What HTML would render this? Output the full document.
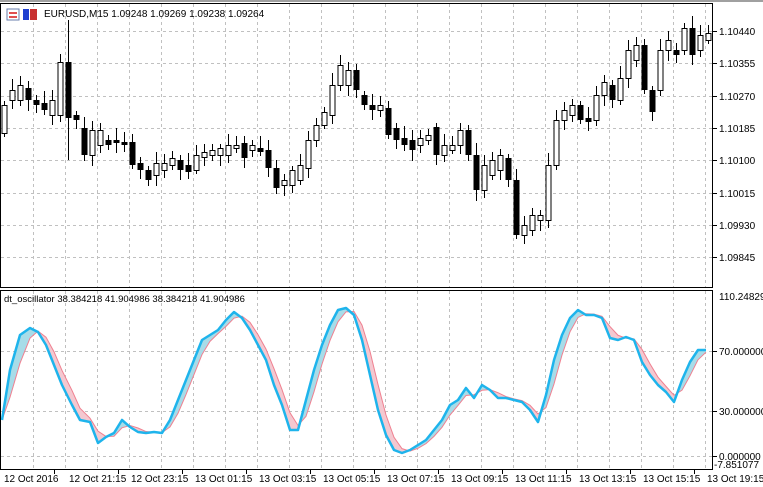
<!DOCTYPE html>
<html><head><meta charset="utf-8"><style>
html,body{margin:0;padding:0;background:#fff;width:763px;height:487px;overflow:hidden;font-family:"Liberation Sans","DejaVu Sans",sans-serif;}
svg{display:block}
</style></head><body>
<svg id="s" width="763" height="487" xmlns="http://www.w3.org/2000/svg" font-family="Liberation Sans, DejaVu Sans, sans-serif" font-size="10">
<rect x="0" y="0" width="763" height="2" fill="#a0a0a0"/>
<g id="grid" stroke="#c0c0c0" stroke-dasharray="3,3" stroke-width="1"></g>
<g id="candles"></g>
<g id="osc"></g>
<rect x="0.5" y="3.5" width="712" height="284" fill="none" stroke="#000"/>
<rect x="0.5" y="290.5" width="712" height="179" fill="none" stroke="#000"/>
<g fill="#000">
<text x="719" y="35">1.10440</text>
<text x="719" y="67">1.10355</text>
<text x="719" y="100">1.10270</text>
<text x="719" y="132">1.10185</text>
<text x="719" y="164">1.10100</text>
<text x="719" y="197">1.10015</text>
<text x="719" y="229">1.09930</text>
<text x="719" y="261">1.09845</text>
<text x="719" y="300">110.248292</text>
<text x="719" y="355">70.000000</text>
<text x="719" y="415">30.000000</text>
<text x="719" y="460">0.000000</text>
<text x="714" y="468">-7.851077</text>
<text x="4" y="482">12 Oct 2016</text>
<text x="69" y="482">12 Oct 21:15</text>
<text x="131" y="482">12 Oct 23:15</text>
<text x="195" y="482">13 Oct 01:15</text>
<text x="259" y="482">13 Oct 03:15</text>
<text x="323" y="482">13 Oct 05:15</text>
<text x="387" y="482">13 Oct 07:15</text>
<text x="451" y="482">13 Oct 09:15</text>
<text x="515" y="482">13 Oct 11:15</text>
<text x="579" y="482">13 Oct 13:15</text>
<text x="643" y="482">13 Oct 15:15</text>
<text x="707" y="482">13 Oct 19:15</text>
<text x="44" y="17">EURUSD,M15  1.09248 1.09269 1.09238 1.09264</text>
<text x="4" y="302" font-size="9.5">dt_oscillator 38.384218 41.904986 38.384218 41.904986</text>
</g>
<g id="ticks" stroke="#000"></g>
<rect x="7" y="9" width="12" height="11" fill="#fff" stroke="#6a7fae"/>
<rect x="9" y="12" width="8" height="2" fill="#e05050"/><rect x="9" y="16" width="8" height="2" fill="#e05050"/>
<rect x="23" y="9" width="6" height="11" fill="#2040d0"/><rect x="30" y="9" width="7" height="11" fill="#c83030"/>
</svg>
<script>
var NS="http://www.w3.org/2000/svg";
function el(p,t,a){var e=document.createElementNS(NS,t);for(var k in a)e.setAttribute(k,a[k]);p.appendChild(e);return e;}
var g=document.getElementById('grid');
for(var x=33;x<712;x+=32){el(g,'line',{x1:x+.5,y1:4,x2:x+.5,y2:287});el(g,'line',{x1:x+.5,y1:291,x2:x+.5,y2:469});}
[31,63,96,128,160,193,225,257].forEach(function(y){el(g,'line',{x1:1,y1:y+.5,x2:712,y2:y+.5});});
[351,411,456].forEach(function(y){el(g,'line',{x1:1,y1:y+.5,x2:712,y2:y+.5});});
var t=document.getElementById('ticks');
[65,129,193,257,321,385,449,513,577,641,705].forEach(function(x){el(t,'line',{x1:x-10.5,y1:470,x2:x-10.5,y2:474});});
[31,63,96,128,160,193,225,257,351,411,456].forEach(function(y){el(t,'line',{x1:713,y1:y+.5,x2:717,y2:y+.5});});
var c=[[4,133,105],[12,100,90],[20,100,85],[28,88,100],[36,100,105],[44,103,110],[52,115,100],[60,115,62],[68,62,118],[76,115,120],[84,128,155],[92,155,130],[100,145,130],[108,140,145],[116,140,143],[124,142,145],[132,142,165],[140,163,170],[148,170,180],[156,175,163],[164,170,163],[172,165,158],[180,160,170],[188,165,172],[196,170,155],[204,157,152],[212,155,150],[220,155,148],[228,155,145],[236,148,145],[244,143,158],[252,150,145],[260,148,152],[268,150,168],[276,168,188],[284,185,180],[292,185,170],[300,180,165],[308,168,140],[316,140,125],[324,125,112],[332,115,85],[340,85,65],[348,85,70],[356,70,90],[364,95,105],[372,105,110],[380,110,105],[388,108,135],[396,128,140],[404,138,145],[412,140,150],[420,145,138],[428,140,135],[436,127,155],[444,155,145],[452,150,145],[460,145,130],[468,130,155],[476,155,190],[484,190,165],[492,175,160],[500,170,155],[508,158,180],[516,180,235],[524,235,225],[532,230,215],[540,220,215],[548,220,165],[556,165,120],[564,120,110],[572,115,105],[580,105,120],[588,118,122],[596,120,95],[604,95,82],[612,85,100],[620,100,78],[628,78,50],[636,60,45],[644,45,90],[652,90,112],[660,90,50],[668,50,40],[676,50,55],[684,50,28],[692,28,55],[700,50,35],[708,40,33]];
var cg=document.getElementById('candles');
c.forEach(function(a,i){var x=a[0],o=a[1],cl=a[2],top=Math.min(o,cl),bot=Math.max(o,cl);
var hi=top-4-(i*7%9),lo=bot+4+(i*5%8);if(i==8){hi=20;lo=160;}
el(cg,'line',{x1:x+.5,y1:hi,x2:x+.5,y2:lo,stroke:'#000'});
if(cl<o)el(cg,'rect',{x:x-2,y:top+.5,width:5,height:Math.max(1,bot-top),fill:'#fff',stroke:'#000'});
else el(cg,'rect',{x:x-2.5,y:top,width:6,height:Math.max(1,bot-top),fill:'#000'});});
var b=[[2,420],[10,370],[20,335],[30,328],[38,332],[46,345],[54,365],[62,385],[72,405],[80,420],[90,422],[98,443],[106,437],[114,433],[122,420],[130,427],[138,432],[146,433],[154,432],[162,433],[170,420],[178,400],[186,380],[194,360],[202,340],[210,335],[218,330],[226,320],[234,312],[242,318],[250,330],[258,345],[266,360],[274,385],[282,405],[290,430],[298,430],[306,400],[314,370],[322,345],[330,325],[338,310],[346,308],[354,315],[362,340],[370,375],[378,410],[386,435],[394,450],[402,453],[410,450],[418,445],[426,440],[434,430],[442,420],[450,405],[458,400],[466,388],[474,398],[482,385],[490,390],[498,398],[506,398],[514,400],[522,402],[530,410],[538,422],[546,395],[554,360],[562,335],[570,318],[578,310],[586,315],[594,315],[602,318],[610,338],[618,340],[626,337],[634,340],[642,362],[650,375],[658,385],[666,392],[674,402],[682,380],[690,362],[698,350],[706,350]];
var p=b.map(function(q,i){var a=b[Math.max(0,i-1)][1],d=b[Math.max(0,i-2)][1];return [q[0],(q[1]+a*0.8+d*0.4)/2.2];});
var og=document.getElementById('osc');
for(var i=0;i<b.length-1;i++){var up=(b[i][1]+b[i+1][1])<(p[i][1]+p[i+1][1]);
el(og,'polygon',{points:b[i][0]+','+b[i][1]+' '+b[i+1][0]+','+b[i+1][1]+' '+p[i+1][0]+','+p[i+1][1]+' '+p[i][0]+','+p[i][1],fill:up?'#a8dce8':'#f4c8d0',stroke:'none'});}
el(og,'polyline',{points:p.map(function(q){return q.join(',')}).join(' '),fill:'none',stroke:'#f08090','stroke-width':1});
el(og,'polyline',{points:b.map(function(q){return q.join(',')}).join(' '),fill:'none',stroke:'#1eb4ec','stroke-width':2.5,'stroke-linejoin':'round'});
</script>
</body></html>
